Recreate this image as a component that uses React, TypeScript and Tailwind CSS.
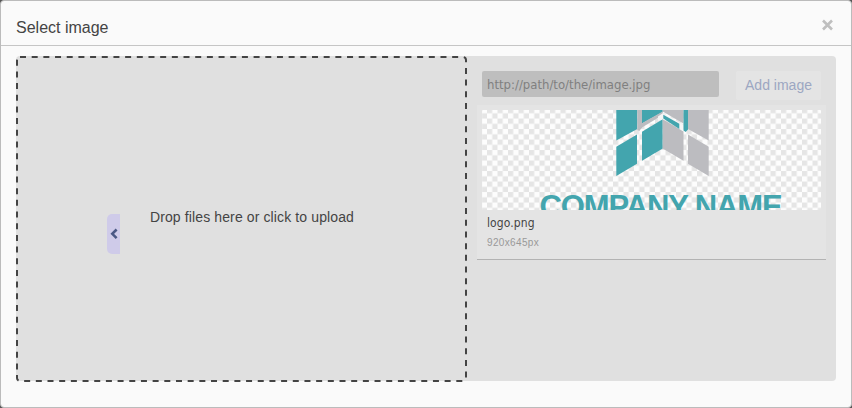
import React from "react";

function Logo() {
  return (
    <svg width="339" height="100" viewBox="482 110 339 100" className="block rounded-[1px]">
      <defs>
        <pattern id="checker" x="487" y="108.05" width="10.5" height="10.5" patternUnits="userSpaceOnUse">
          <rect width="10.5" height="10.5" fill="#fdfdfd" />
          <rect width="5.25" height="5.25" fill="#e5e5e5" />
          <rect x="5.25" y="5.25" width="5.25" height="5.25" fill="#e5e5e5" />
        </pattern>
      </defs>
      <rect x="482" y="110" width="339" height="100" fill="url(#checker)" />
      <g fill="#43a5ae">
        <path d="M616.3 110H637.3V129L616.3 140.6Z" />
        <path d="M616.3 146.7L637 134.5V163.7L616.3 176Z" />
        <path d="M642 110H662.7V112L642 123.5Z" />
        <path d="M642 131.7L662.7 119.3V148.5L642 160.7Z" />
      </g>
      <g fill="#bcbcc0">
        <path d="M637.3 110H642V127.6L639.3 131L637.3 130Z" />
        <path d="M642 123.2L662.7 111.4V115L642 127.6Z" />
        <path d="M662.7 110H683.5V123.5L662.7 111.5Z" />
        <path d="M662.7 119.3L683.5 131.5V160.7L662.7 148.5Z" />
        <path d="M688 110H708.7V140.6L688 129Z" />
        <path d="M688 134.5L708.7 146.7V176L688 163.7Z" />
      </g>
      <path d="M658 116.5L662.7 113.2L683.5 125V131L679.3 128.9V123.8L663.3 114.7V118.4L658 121Z" fill="#f6f6f6" />
      <g fill="#43a5ae">
        <path d="M663.3 114.7L679.3 123.8V128.9L663.3 118.4Z" />
        <path d="M683.5 110H688V129.6L685.7 132L683.5 130.5Z" />
      </g>
      <text x="539.6" y="216.8" fill="#43a5ae" fontFamily="'Liberation Sans', Arial, sans-serif" fontWeight="700" fontSize="31" textLength="243" lengthAdjust="spacing">COMPANY NAME</text>
    </svg>
  );
}

function DropZone() {
  return (
    <div className="relative flex h-[326px] w-[451px] items-center justify-center">
      <svg className="absolute inset-0" width="451" height="326" fill="none">
        <rect x="1" y="1" width="449" height="324" rx="3" stroke="#444" strokeWidth="2" strokeDasharray="6 5.68" />
      </svg>
      <span className="relative mb-1 ml-[21px] text-[14px] leading-5 tracking-[0.12px]">Drop files here or click to upload</span>
      <button aria-label="Collapse" className="absolute left-[91px] top-[158px] flex h-10 w-[13px] items-center justify-center rounded-l-[5px] bg-[#cfcbe9] pb-[1px]">
        <svg width="8" height="12" viewBox="0 0 8 12" fill="none" stroke="#4a5884" strokeWidth="2.6">
          <path d="M6.6 1.5L2.3 5.8L6.6 10.1" />
        </svg>
      </button>
    </div>
  );
}

export default function App() {
  return (
    <div className="bg-[#555]">
      <div className="flex h-[408px] w-[852px] flex-col rounded border border-[#bbb] bg-[#fafafa] font-['Liberation_Sans',Arial,sans-serif] text-[#444]">
        <header className="flex h-[45px] items-center justify-between border-b border-[#c5c5c5] pl-[15px] pr-[17px] pt-[8px]">
          <h1 className="pt-[2px] text-[16px] leading-5">Select image</h1>
          <button aria-label="Close" className="mb-[4px]">
            <svg width="13" height="12" viewBox="0 0 13 12" stroke="#bfbfbf" strokeWidth="2.6">
              <path d="M2 1.5L11 10.5M11 1.5L2 10.5" />
            </svg>
          </button>
        </header>
        <main className="mx-[15px] mt-[10px] flex h-[325px] rounded bg-[#e0e0e0]">
          <DropZone />
          <section className="flex-1 pl-[10px] pt-[15px]">
            <div className="flex h-[34px] items-start pl-[5px]">
              <input
                placeholder="http://path/to/the/image.jpg"
                className="h-[26px] w-[237px] rounded-xs bg-[#bebebe] px-[5px] pt-px font-['DejaVu_Sans_Condensed','DejaVu_Sans',sans-serif] text-[13px] font-stretch-condensed outline-none placeholder:text-[#808080]"
              />
              <button className="ml-[17px] h-[29px] w-[85px] rounded-xs bg-[#e4e4e4] text-[14px] text-[#9ca7c2]">Add image</button>
            </div>
            <article className="h-[155px] w-[349px] border-b border-[#b3b3b3] bg-[#e4e4e4] px-[5px] pt-[5px]">
              <Logo />
              <p className="pl-[5px] pt-[5px] font-['DejaVu_Sans_Condensed','DejaVu_Sans',sans-serif] text-[12px] leading-4 tracking-[0.1px] font-stretch-condensed">logo.png</p>
              <p className="pl-[5px] pt-[6px] text-[10px] leading-3 tracking-[0.35px] text-[#999]">920x645px</p>
            </article>
          </section>
        </main>
      </div>
    </div>
  );
}
